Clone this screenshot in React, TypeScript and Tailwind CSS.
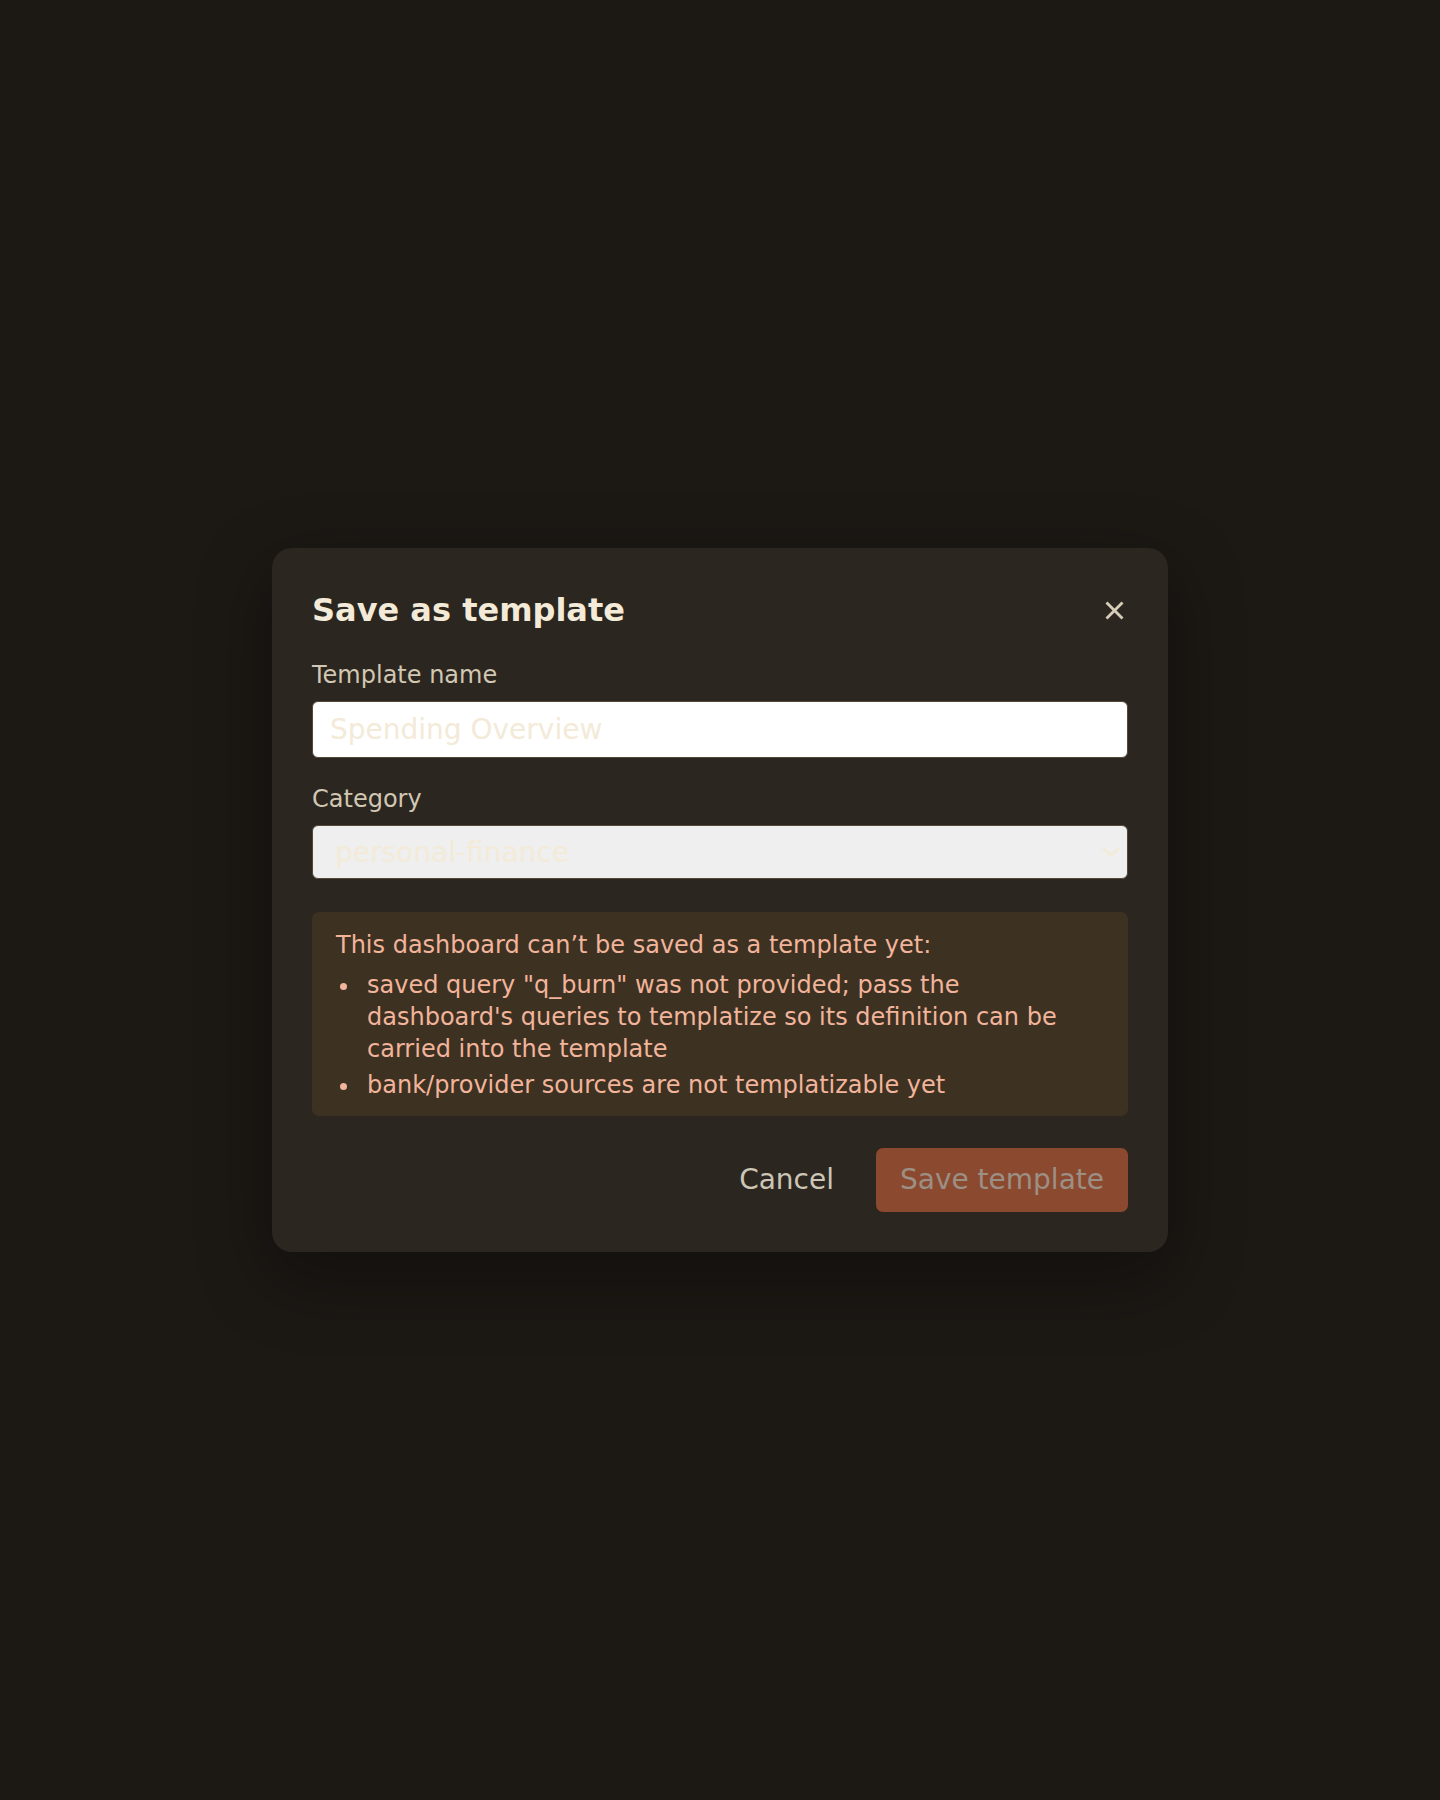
import React from "react";

export default function App() {
  return (
    <div className="min-h-screen w-full bg-[#1c1814] flex items-center justify-center font-['DejaVu_Sans',sans-serif]">
      <div
        role="dialog"
        aria-labelledby="tpl-title"
        className="w-[896px] rounded-[20px] bg-[#2b2620] px-[40px] pt-[40px] pb-[40px] shadow-[0_24px_72px_rgba(0,0,0,0.38)]"
      >
        <div className="flex items-center justify-between mb-[27px]">
          <h2 id="tpl-title" className="text-[32px] leading-[45px] font-bold text-[#f3ead8]">
            Save as template
          </h2>
          <button aria-label="Close" className="p-[4px] text-[#d6ccb8]">
            <svg width="19" height="19" viewBox="0 0 19 19" fill="none" stroke="currentColor" strokeWidth="2.8">
              <line x1="1.5" y1="1.5" x2="17.5" y2="17.5" />
              <line x1="17.5" y1="1.5" x2="1.5" y2="17.5" />
            </svg>
          </button>
        </div>

        <label className="block text-[24px] leading-[31.68px] text-[#d2c7b2] mb-[8.64px]">Template name</label>
        <input
          readOnly
          defaultValue="Spending Overview"
          className="block w-full h-[57.6px] rounded-[6px] border border-[#54473a] bg-white px-[17px] text-[28px] text-[#f3ead8] outline-none"
        />

        <label className="block mt-[26px] text-[24px] leading-[31.68px] text-[#d2c7b2] mb-[8.64px]">Category</label>
        <div
          role="combobox"
          className="flex items-center justify-between w-full h-[54px] rounded-[6px] border border-[#54473a] bg-[#efefef] pl-[22px] pr-[7px] text-[28px] text-[#f3ead8]"
        >
          <span className="pt-[2px]">personal-finance</span>
          <svg width="18" height="10" viewBox="0 0 18 10" fill="none" stroke="#f3ead8" strokeWidth="2.8">
            <polyline points="1,1 9,8.5 17,1" />
          </svg>
        </div>

        <div className="mt-[33px] rounded-[7px] bg-[#3d3222] pl-[24px] pr-[36px] pt-[17px] pb-[15px] text-[24px] leading-[32px] text-[#f2b49b]">
          <p>This dashboard can’t be saved as a template yet:</p>
          <ul className="list-disc pl-[25px] mt-[8px]">
            <li className="pl-[6px]">
              saved query "q_burn" was not provided; pass the dashboard's queries to templatize so its definition can be carried into the template
            </li>
            <li className="pl-[6px] mt-[4px]">bank/provider sources are not templatizable yet</li>
          </ul>
        </div>

        <div className="mt-[32px] flex items-center justify-end gap-[18px]">
          <button className="h-[64px] px-[24px] text-[28px] text-[#cdc5b6]">Cancel</button>
          <button
            disabled
            className="h-[64px] w-[252px] rounded-[7px] bg-[#8b4a30] text-[28px] text-[#9c8f84]"
          >
            Save template
          </button>
        </div>
      </div>
    </div>
  );
}
